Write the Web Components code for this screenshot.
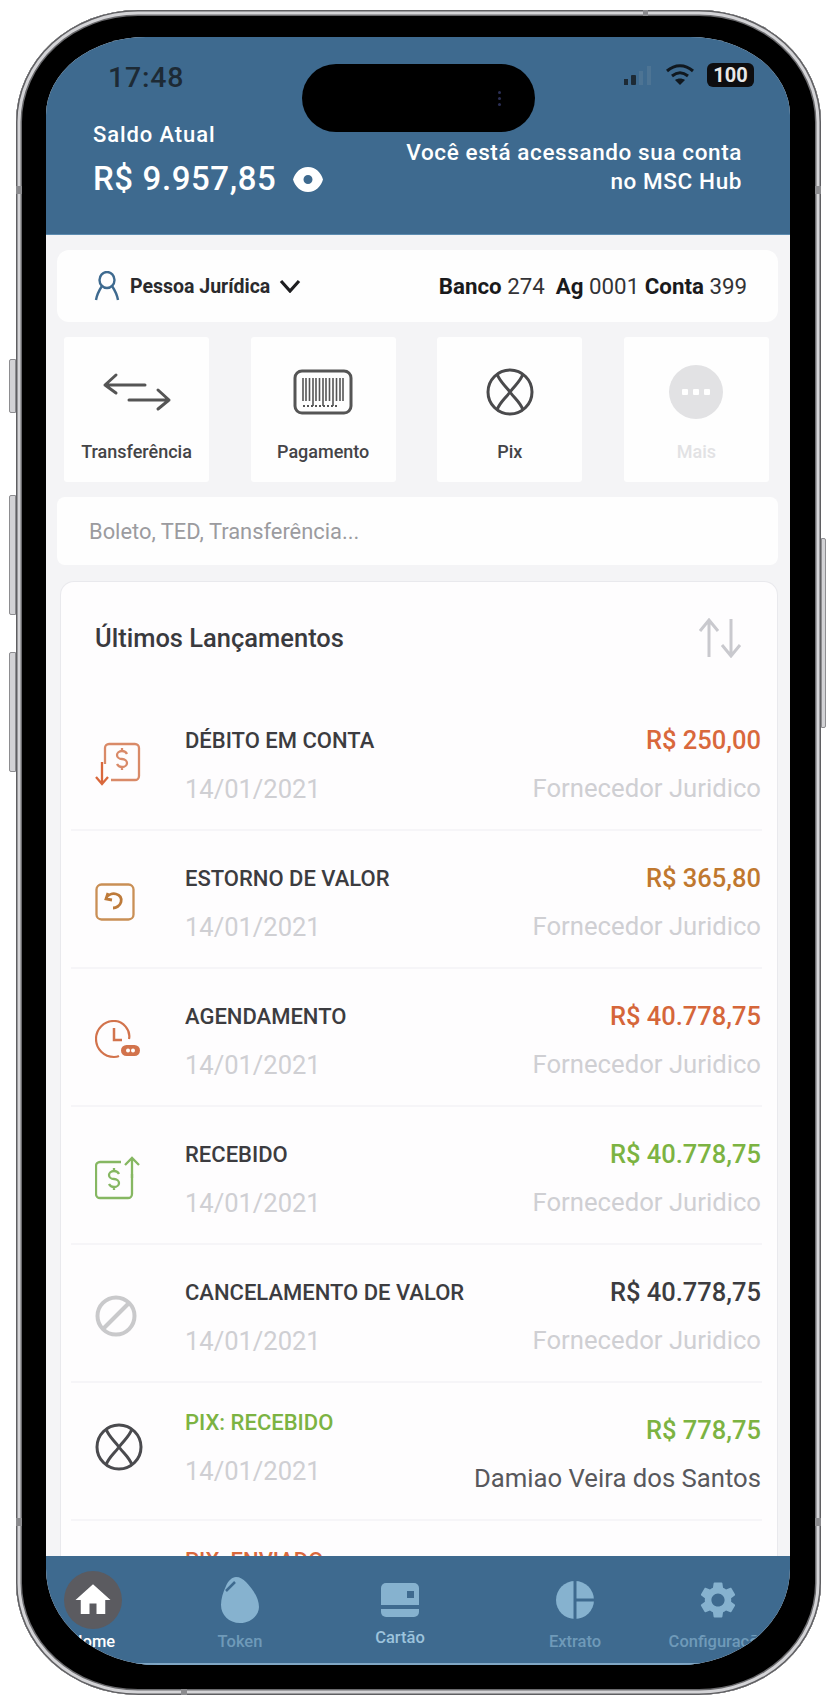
<!DOCTYPE html>
<html lang="pt-BR">
<head>
<meta charset="utf-8">
<title>MSC Hub</title>
<style>
  html, body { margin: 0; background: #fff; }
  body { font-family: Roboto, "Liberation Sans", sans-serif; height: 1704px; overflow: hidden; }
</style>
</head>
<body>
<phone-frame>
  <status-bar></status-bar>
  <balance-header></balance-header>
  <main-area>
    <account-bar></account-bar>
    <action-row>
      <action-tile label="Transferência">
        <svg width="70" height="40" viewBox="0 0 70 40" fill="none" stroke="#555" stroke-width="3" stroke-linecap="round" stroke-linejoin="round"><path d="M3 13H43M14 3L3 13l11 8"/><path d="M27 28H67M56 18l11 10-11 9"/></svg>
      </action-tile>
      <action-tile label="Pagamento">
        <svg width="60" height="46" viewBox="0 0 60 46" fill="none" stroke="#555"><rect x="2" y="2" width="56" height="42" rx="7" stroke-width="3"/><path stroke-width="1.6" d="M10 9v23M13 9v23M16.500 9v23M20 9v28M23 9v23M26.500 9v23M30 9v28M33 9v23M36.500 9v23M40 9v28M43.500 9v23M47 9v23M50 9v23"/><path stroke-width="2" stroke-dasharray="2 2" d="M10 37h36"/></svg>
      </action-tile>
      <action-tile label="Pix">
        <svg width="48" height="48" viewBox="0 0 48 48" fill="none" stroke="#4a4a4c" stroke-width="3"><circle cx="24" cy="24" r="22"/><path d="M11 6c3 8 8 11 13 18 5 7 10 10 13 18M37 6c-3 8-8 11-13 18-5 7-10 10-13 18"/></svg>
      </action-tile>
      <action-tile label="Mais" muted>
        <svg width="54" height="54" viewBox="0 0 54 54"><circle cx="27" cy="27" r="27" fill="#e2e2e4"/><rect x="13" y="24" width="6" height="6" rx="1" fill="#fff"/><rect x="24" y="24" width="6" height="6" rx="1" fill="#fff"/><rect x="35" y="24" width="6" height="6" rx="1" fill="#fff"/></svg>
      </action-tile>
    </action-row>
    <search-box>Boleto, TED, Transferência...</search-box>
    <entries-panel>
      <entry-row tone="#d9683c">
        <svg slot="icon" width="46" height="44" viewBox="0 0 46 44" fill="none" stroke="#d98a68" stroke-width="2.300"><path d="M10 22V6a4 4 0 0 1 4-4h26a4 4 0 0 1 4 4v28a4 4 0 0 1-4 4H16"/><path d="M7 20v22M1 35l6 7 6-7" stroke="#d9683c"/><path d="M32 12c-1-2-3-3-5-3-3 0-5 2-5 4s2 4 5 4 5 2 5 4-2 4-5 4-4-1-5-3M27 6v3M27 25v3"/></svg>
        <span slot="title">DÉBITO EM CONTA</span><span slot="date">14/01/2021</span>
        <span slot="amount">R$ 250,00</span><span slot="party">Fornecedor Juridico</span>
      </entry-row>
      <entry-row tone="#c0782f">
        <svg slot="icon" width="40" height="38" viewBox="0 0 40 38" fill="none" stroke="#c98f55" stroke-width="2.300"><rect x="1.500" y="1.500" width="37" height="35" rx="5"/><path d="M13 10l-2 6 6 1M11 15c2-3 6-5 10-4 4 1 6 4 5 8-1 4-5 6-8 6" stroke="#bd7a3a" stroke-width="2.800"/></svg>
        <span slot="title">ESTORNO DE VALOR</span><span slot="date">14/01/2021</span>
        <span slot="amount">R$ 365,80</span><span slot="party">Fornecedor Juridico</span>
      </entry-row>
      <entry-row tone="#d5663a">
        <svg slot="icon" width="46" height="40" viewBox="0 0 46 40" fill="none" stroke="#d2734c" stroke-width="2.200"><path d="M34 19C36 10 28 1 19 1 9 1 1 9 1 19s8 18 18 18c2 0 3 0 5-1"/><path d="M19 8v12h8" stroke-width="2.500"/><rect x="26" y="25" width="19" height="11" rx="5.500" fill="#d2734c" stroke="none"/><circle cx="33" cy="30.500" r="2" fill="#fff" stroke="none"/><circle cx="38" cy="30.500" r="2" fill="#fff" stroke="none"/></svg>
        <span slot="title">AGENDAMENTO</span><span slot="date">14/01/2021</span>
        <span slot="amount">R$ 40.778,75</span><span slot="party">Fornecedor Juridico</span>
      </entry-row>
      <entry-row tone="#7cb342">
        <svg slot="icon" width="46" height="44" viewBox="0 0 46 44" fill="none" stroke="#86b762" stroke-width="2.300"><path d="M26 6H5a4 4 0 0 0-4 4v28a4 4 0 0 0 4 4h28a4 4 0 0 0 4-4V18"/><path d="M37 22V2M30 9l7-7 7 7"/><path d="M24 18c-1-2-3-3-5-3-3 0-5 2-5 4s2 4 5 4 5 2 5 4-2 4-5 4-4-1-5-3M19 12v3M19 31v3"/></svg>
        <span slot="title">RECEBIDO</span><span slot="date">14/01/2021</span>
        <span slot="amount">R$ 40.778,75</span><span slot="party">Fornecedor Juridico</span>
      </entry-row>
      <entry-row tone="#3c3c40">
        <svg slot="icon" width="42" height="42" viewBox="0 0 42 42" fill="none" stroke="#c9c9cb" stroke-width="4"><circle cx="21" cy="21" r="18.500"/><path d="M8 34L34 8"/></svg>
        <span slot="title">CANCELAMENTO DE VALOR</span><span slot="date">14/01/2021</span>
        <span slot="amount">R$ 40.778,75</span><span slot="party">Fornecedor Juridico</span>
      </entry-row>
      <entry-row tone="#7cb342" title-tone="#7cb342" party-tone="#58585c" lifted>
        <svg slot="icon" width="48" height="48" viewBox="0 0 48 48" fill="none" stroke="#4a4a4e" stroke-width="3"><circle cx="24" cy="24" r="22"/><path d="M11 6c3 8 8 11 13 18 5 7 10 10 13 18M37 6c-3 8-8 11-13 18-5 7-10 10-13 18"/></svg>
        <span slot="title">PIX: RECEBIDO</span><span slot="date">14/01/2021</span>
        <span slot="amount">R$ 778,75</span><span slot="party">Damiao Veira dos Santos</span>
      </entry-row>
      <entry-row tone="#d9683c" title-tone="#d9683c" lifted>
        <span slot="title">PIX: ENVIADO</span>
      </entry-row>
    </entries-panel>
  </main-area>
  <tab-bar>
    <tab-item label="Home" active style="width:94px">
      <svg width="42" height="42" viewBox="0 0 24 24" fill="#fff"><path d="M10 20v-6h4v6h5v-8h3L12 3 2 12h3v8z"/></svg>
    </tab-item>
    <tab-item label="Token" style="width:200px">
      <svg width="40" height="46" viewBox="0 0 40 46"><path fill="#86b2cf" d="M16 0c-4 0-8 4-10 9C3 15 1 22 1 28c0 10 8 18 19 18s19-8 19-16c0-9-7-19-13-25-3-3-6-5-10-5z"/><path d="M6 14L15 5" stroke="#3e6a8f" stroke-width="2.500" fill="none"/></svg>
    </tab-item>
    <tab-item label="Cartão" selected style="width:120px">
      <svg width="40" height="34" viewBox="0 0 40 34"><path fill="#86b2cf" d="M6 0h28a5 5 0 0 1 5 5v17H1V5a5 5 0 0 1 5-5z"/><rect x="27" y="8" width="7" height="7" fill="#3e6a8f"/><path fill="#86b2cf" d="M1 26h38v3a5 5 0 0 1-5 5H6a5 5 0 0 1-5-5z"/></svg>
    </tab-item>
    <tab-item label="Extrato" style="width:230px">
      <svg width="38" height="38" viewBox="0 0 38 38"><circle cx="19" cy="19" r="19" fill="#86b2cf"/><path d="M19 0v38M19 19h19" stroke="#3e6a8f" stroke-width="3" fill="none"/></svg>
    </tab-item>
    <tab-item label="Configuração" style="width:56px">
      <svg width="44" height="44" viewBox="0 0 24 24" fill="#86b2cf"><path d="M19.140 12.940c.04-.3.06-.61.06-.94 0-.32-.02-.64-.07-.94l2.030-1.580c.18-.14.23-.41.12-.61l-1.920-3.320c-.12-.22-.37-.29-.59-.22l-2.390.96c-.5-.38-1.030-.7-1.620-.94l-.36-2.540c-.04-.24-.24-.41-.48-.41h-3.840c-.24 0-.43.17-.47.41l-.36 2.540c-.59.24-1.130.57-1.620.94l-2.390-.96c-.22-.08-.47 0-.59.22L2.740 8.870c-.12.21-.08.47.12.61l2.030 1.580c-.05.3-.09.63-.09.94s.02.64.07.94l-2.030 1.580c-.18.14-.23.41-.12.61l1.920 3.320c.12.22.37.29.59.22l2.390-.96c.5.38 1.030.7 1.620.94l.36 2.540c.05.24.24.41.48.41h3.840c.24 0 .44-.17.47-.41l.36-2.540c.59-.24 1.130-.56 1.620-.94l2.390.96c.22.08.47 0 .59-.22l1.920-3.320c.12-.22.07-.47-.12-.61l-2.010-1.580zM12 15.600c-1.980 0-3.600-1.620-3.600-3.600s1.620-3.600 3.600-3.600 3.600 1.620 3.600 3.600-1.620 3.600-3.600 3.600z"/></svg>
    </tab-item>
  </tab-bar>
</phone-frame>

<script>
"use strict"
// small helper, every element is just a shadow root + styles
function define(tag, html, setup){
    customElements.define(tag, class extends HTMLElement{
        constructor(){
            super();
            this.attachShadow({mode: "open"});
        }
        connectedCallback(){
            this.shadowRoot.innerHTML = typeof html === "function" ? html(this) : html;
            if(setup) setup(this);
        }
    });
}

define("phone-frame", `
    <style>
    :host{ display:block; position:relative; width:805px; height:1685px; margin:10px 0 0 16px; }
    .body{
        box-sizing:border-box; width:100%; height:100%;
        padding:27px 31px 30px 30px;
        background:#000;
        border-radius:122px / 112px;
        box-shadow: inset 0 0 0 1.500px #5f5f62, inset 0 0 0 4.500px #d4d4d7, inset 0 0 0 6px #6a6a6d;
    }
    .screen{
        display:flex; flex-direction:column;
        width:744px; height:1628px; overflow:hidden;
        background:#f4f4f6;
        border-radius:100px 100px 112px 112px / 78px 78px 96px 96px;
    }
    .btn{ position:absolute; background:#d2d2d5; border:1px solid #8d8d90; box-sizing:border-box; }
    .l{ left:-7px; width:7px; border-radius:2px 0 0 2px; }
    .r{ right:-5px; width:5px; border-radius:0 2px 2px 0; }
    .band{ position:absolute; background:#8b8b8e; }
    </style>
    <div class="btn l" style="top:349px;height:54px"></div>
    <div class="btn l" style="top:485px;height:120px"></div>
    <div class="btn l" style="top:642px;height:120px"></div>
    <div class="btn r" style="top:528px;height:190px"></div>
    <div class="band" style="top:0;left:627px;width:5px;height:6px"></div>
    <div class="band" style="bottom:0;left:165px;width:6px;height:6px"></div>
    <div class="band" style="top:176px;left:0;width:6px;height:8px"></div>
    <div class="band" style="top:176px;right:0;width:6px;height:8px"></div>
    <div class="band" style="top:1508px;left:0;width:6px;height:8px"></div>
    <div class="band" style="top:1508px;right:0;width:6px;height:8px"></div>
    <div class="body"><div class="screen"><slot></slot></div></div>
`);

define("status-bar", `
    <style>
    :host{ display:block; position:absolute; top:27px; left:30px; width:744px; height:100px; z-index:2; }
    .time{ position:absolute; left:62px; top:24px; font:500 28.500px/34px Roboto,sans-serif; color:#1d2a35; letter-spacing:.8px; }
    .island{ position:absolute; left:256px; top:27px; width:233px; height:68px; border-radius:34px; background:#000; }
    .island i{ position:absolute; left:196px; top:27px; width:3px; height:3px; background:#2b2f55; border-radius:50%; box-shadow:0 6px 0 #2b2f55, 0 12px 0 #2b2f55; }
    .icons{ position:absolute; right:36px; top:26px; display:flex; align-items:center; gap:12px; }
    .bat{ font:700 20px/24px Roboto,sans-serif; color:#e8e8e8; background:#0d0d0f; border-radius:6px; width:47px; height:24px; text-align:center; }
    </style>
    <span class="time">17:48</span>
    <div class="island"><i></i></div>
    <div class="icons">
        <svg width="30" height="24" viewBox="0 0 30 24"><rect x="1" y="16" width="4" height="6" fill="#1d2a35"/><rect x="8" y="12" width="5" height="10" rx="1" fill="#1d2a35"/><rect x="16" y="8" width="4" height="14" fill="#4d7494"/><rect x="24" y="3" width="4" height="19" fill="#4d7494"/></svg>
        <svg width="30" height="24" viewBox="0 0 30 24" fill="none" stroke="#10181f" stroke-width="3"><path d="M2 8c8-7 18-7 26 0M7 13c5-4 11-4 16 0"/><path d="M15 22l-5-5c3-2 7-2 10 0z" fill="#10181f" stroke="none"/></svg>
        <span class="bat">100</span>
    </div>
`);

define("balance-header", `
    <style>
    :host{ display:flex; justify-content:space-between; align-items:flex-end; box-sizing:border-box;
        flex:none; height:198px; background:#3e6a8f; color:#fff; padding:0 48px 37px 47px;
        border-bottom:1px solid #5d8cb0; font-family:Roboto,sans-serif; }
    .label{ font-size:22px; line-height:28px; font-weight:500; letter-spacing:.9px; margin-bottom:12px; }
    .value{ display:flex; align-items:center; gap:17px; font-size:33px; line-height:36px; font-weight:500; letter-spacing:.6px; }
    .note{ text-align:right; font-size:22.500px; line-height:29px; font-weight:500; letter-spacing:.6px; margin-bottom:1px; }
    </style>
    <div>
        <div class="label">Saldo Atual</div>
        <div class="value">R$ 9.957,85
            <svg width="30" height="25" viewBox="0 0 30 25"><path fill="#fff" fill-rule="evenodd" d="M15 0C23 0 28 6 30 12.500 28 19 23 25 15 25S2 19 0 12.500C2 6 7 0 15 0zm0 8a4.500 4.500 0 1 0 0 9 4.500 4.500 0 0 0 0-9z"/></svg>
        </div>
    </div>
    <div class="note">Você está acessando sua conta<br>no MSC Hub</div>
`);

define("main-area", `
    <style>
    :host{ display:block; flex:1; min-height:0; overflow:hidden; background:#f4f4f6; padding:15px 12px 0 11px; }
    </style>
    <slot></slot>
`);

define("account-bar", `
    <style>
    :host{ display:flex; align-items:center; justify-content:space-between; height:72px;
        background:#fefefe; border-radius:12px; padding:0 31px 0 37px; color:#1f1f22; font-family:Roboto,sans-serif; }
    .who{ display:flex; align-items:center; font-size:19.500px; font-weight:700; color:#2a2a2d; }
    .who svg:first-child{ margin-right:10px; }
    .who svg:last-child{ margin-left:9px; }
    .bank{ font-size:22.300px; color:#333336; }
    b{ font-weight:700; color:#1a1a1c; }
    </style>
    <div class="who">
        <svg width="26" height="30" viewBox="0 0 26 30" fill="none" stroke="#3e6a8f" stroke-width="2.400"><ellipse cx="13" cy="9" rx="7.500" ry="8"/><path d="M8 15c-2 3-5 8-6 14M18 15c2 3 5 8 6 14"/></svg>
        Pessoa Jurídica
        <svg width="22" height="14" viewBox="0 0 22 14" fill="none" stroke="#1e1e20" stroke-width="3.200"><path d="M2 2l9 10 9-10"/></svg>
    </div>
    <div class="bank"><b>Banco</b> 274&nbsp; <b>Ag</b> 0001 <b>Conta</b> 399</div>
`);

define("action-row", `
    <style>
    :host{ display:flex; justify-content:space-between; padding:0 9px 0 7px; margin:15px 0 15px; }
    </style>
    <slot></slot>
`);

define("action-tile", el => `
    <style>
    :host{ display:flex; flex-direction:column; align-items:center; width:145px; height:145px;
        background:#fefefe; border-radius:3px; font-family:Roboto,sans-serif; }
    .icon{ height:60px; margin-top:25px; display:flex; align-items:center; justify-content:center; }
    .label{ margin-top:18px; font-size:18px; line-height:24px; font-weight:500; color:${el.hasAttribute("muted") ? "#e2e2e4" : "#444447"}; }
    </style>
    <div class="icon"><slot></slot></div>
    <div class="label">${el.getAttribute("label")}</div>
`);

define("search-box", `
    <style>
    :host{ display:flex; align-items:center; height:68px; background:#fefefe; border-radius:8px;
        padding:0 0 0 32px; font:400 21.900px Roboto,sans-serif; color:#9b9b9f; }
    </style>
    <slot></slot>
`);

define("entries-panel", `
    <style>
    :host{ display:block; margin:16px 0 0 3px; background:#fefdfe; border:1px solid #e9e9ed; border-bottom:0;
        border-radius:14px 14px 0 0; padding:0 15px 0 10px; font-family:Roboto,sans-serif; }
    .head{ display:flex; justify-content:space-between; align-items:center; height:111px; padding:0 20px 0 24px;
        font-size:25.500px; font-weight:500; color:#3a3a3e; }
    </style>
    <div class="head">
        <span>Últimos Lançamentos</span>
        <svg width="44" height="40" viewBox="0 0 44 40" fill="none" stroke="#c9c9ce" stroke-width="3"><path d="M11 39V2M2 13L11 2l9 11"/><path d="M33 1v37M24 27l9 11 9-11"/></svg>
    </div>
    <slot></slot>
`);

define("entry-row", el => `
    <style>
    :host{ display:grid; grid-template-columns:114px 1fr auto; box-sizing:border-box; height:138px;
        border-bottom:2px solid #f6f5f8; font-family:Roboto,sans-serif; }
    .icon{ display:flex; align-items:center; padding:${el.hasAttribute("lifted") ? "0 0 8px" : "6px 0 0"} 24px; }
    .left{ padding-top:${el.hasAttribute("lifted") ? 25 : 33}px; }
    .right{ padding-top:32px; padding-right:1px; text-align:right; }
    .title{ font-size:22px; line-height:30px; font-weight:500; color:${el.getAttribute("title-tone") || "#3c3c40"}; }
    .date{ margin-top:18px; font-size:25.500px; line-height:30px; color:#cfcfd3; }
    .amount{ font-size:25.500px; line-height:30px; font-weight:500; color:${el.getAttribute("tone")}; }
    .party{ margin-top:18px; font-size:25.700px; line-height:30px; color:${el.getAttribute("party-tone") || "#cfcfd3"}; }
    </style>
    <div class="icon"><slot name="icon"></slot></div>
    <div class="left">
        <div class="title"><slot name="title"></slot></div>
        <div class="date"><slot name="date"></slot></div>
    </div>
    <div class="right">
        <div class="amount"><slot name="amount"></slot></div>
        <div class="party"><slot name="party"></slot></div>
    </div>
`);

define("tab-bar", `
    <style>
    :host{ display:flex; flex:none; height:109px; background:#3e6a8f; border-bottom:2px solid #7fa6c4; box-sizing:border-box; }
    </style>
    <slot></slot>
`);

define("tab-item", el => {
    let active = el.hasAttribute("active"), selected = el.hasAttribute("selected");
    let color = active ? "#fff" : selected ? "#9cc3dc" : "#6f9ab9";
    return `
    <style>
    :host{ display:flex; flex-direction:column; align-items:center; flex:none; font-family:Roboto,sans-serif; }
    .icon{ display:flex; align-items:center; justify-content:center; width:58px; height:58px; margin-top:15px; border-radius:50%;
        ${active ? "background:#5b5b60;" : ""} }
    .label{ white-space:nowrap; font-size:16.500px; line-height:20px; font-weight:500; color:${color}; margin-top:${selected ? -1 : 3}px; }
    </style>
    <div class="icon"><slot></slot></div>
    <div class="label">${el.getAttribute("label")}</div>
    `;
});
</script>
</body>
</html>
